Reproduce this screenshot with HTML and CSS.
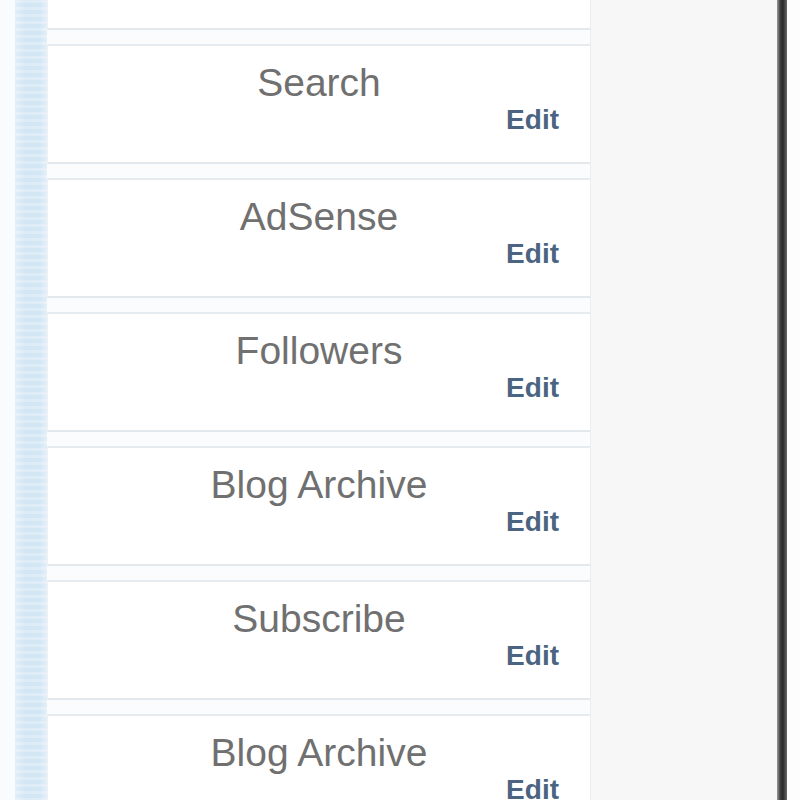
FILE: index.html
```html
<!DOCTYPE html>
<html>
<head>
<meta charset="utf-8">
<link rel="stylesheet" href="styles.css">
</head>
<body>
<div class="page">
  <div class="edge"></div>
  <div class="stripe"></div>
  <div class="column">
    <div class="list">
      <div class="widget"><div class="title"></div><div class="edit">Edit</div></div>
      <div class="widget"><div class="title">Search</div><div class="edit">Edit</div></div>
      <div class="widget"><div class="title">AdSense</div><div class="edit">Edit</div></div>
      <div class="widget"><div class="title">Followers</div><div class="edit">Edit</div></div>
      <div class="widget"><div class="title">Blog Archive</div><div class="edit">Edit</div></div>
      <div class="widget"><div class="title">Subscribe</div><div class="edit">Edit</div></div>
      <div class="widget"><div class="title">Blog Archive</div><div class="edit">Edit</div></div>
    </div>
  </div>
  <div class="side"></div>
  <div class="bar"></div>
  <div class="rest"></div>
</div>
</body>
</html>
```
FILE: styles.css
```css
html, body {
  margin: 0;
  padding: 0;
  background: #ffffff;
}
.page {
  display: flex;
  width: 800px;
  height: 800px;
  overflow: hidden;
  font-family: "Liberation Sans", Arial, sans-serif;
}
.edge {
  width: 15px;
  flex: none;
  background: #f9fbfd;
}
.stripe {
  width: 32px;
  flex: none;
  background:
    repeating-linear-gradient(180deg, rgba(255,255,255,0.25) 0 3px, rgba(255,255,255,0) 3px 7px),
    linear-gradient(90deg, #e2eef8 0, #d3e6f4 30%, #d3e6f4 75%, #e3eff8 100%);
}
.column {
  width: 543px;
  flex: none;
  background: #fbfcfd;
  border-right: 1px solid #eaeef1;
}
.list {
  display: flex;
  flex-direction: column;
  gap: 14px;
  margin-top: -90px;
}
.widget {
  height: 120px;
  flex: none;
  background: #ffffff;
  border-top: 2px solid #e6ebef;
  border-bottom: 2px solid #e3e8ec;
  border-left: 1px solid #eef2f5;
  display: flex;
  flex-direction: column;
  box-sizing: border-box;
}
.title {
  margin-top: 17px;
  height: 40px;
  line-height: 40px;
  text-align: center;
  font-size: 39px;
  color: #707070;
}
.edit {
  margin-top: 2px;
  align-self: flex-end;
  margin-right: 31px;
  height: 30px;
  line-height: 30px;
  font-size: 28px;
  font-weight: bold;
  letter-spacing: 0;
  color: #4a6482;
}
.side {
  width: 186px;
  flex: none;
  background: #f7f7f7;
}
.bar {
  width: 10px;
  flex: none;
  background: linear-gradient(90deg, #9a9a9a 0, #3a3a3a 35%, #2a2a2a 60%, #6a6a6a 100%);
}
.rest {
  flex: 1;
  background: #fdfdfd;
}
```
